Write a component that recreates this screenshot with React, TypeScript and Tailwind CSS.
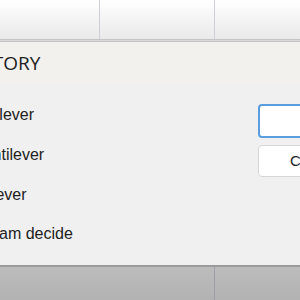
import { FC } from 'react'

const options = [
  { id: 'a', label: 'Cantilever', shift: '-ml-[38px]' },
  { id: 'b', label: 'Non-cantilever', shift: '-ml-[59px]' },
  { id: 'c', label: 'Whichever', shift: '-ml-[49px]' },
  { id: 'd', label: 'Let team decide', shift: '-ml-[41px]' },
]

const App: FC = () => {
  return (
    <div className="w-[300px] h-[300px] overflow-hidden flex flex-col bg-[#f0f0f0] font-['Liberation_Sans',Arial,sans-serif]">
      {/* table header behind the dialog */}
      <div className="h-[39px] flex bg-gradient-to-b from-white to-[#e9e9e9]">
        <div className="w-[100px] border-r border-[#cfcfdc]" />
        <div className="w-[115px] border-r border-[#cfcfdc]" />
        <div className="flex-1" />
      </div>
      <div className="h-[3px] border-y border-[#c4c4c4] bg-[#dadada]" />

      {/* dialog */}
      <div className="h-[42px] bg-[#f3f1ee] flex items-center">
        <span className="-ml-[37px] text-[19px] text-[#222] font-['Open_Sans','Noto_Sans',sans-serif]">HISTORY</span>
      </div>
      <div className="h-[181px] bg-[#f0f0f0] flex">
        <div className="flex-1 flex flex-col pt-[22px]">
          {options.map(o => (
            <div key={o.id} className="h-[41px] flex items-start">
              <span className={`text-[16px] leading-[18px] text-[#222] ${o.shift}`}>{o.label}</span>
            </div>
          ))}
        </div>
        <div className="w-[42px] flex flex-col gap-[7px] pt-[20px]">
          <button className="h-[34px] w-[80px] bg-white border-2 border-[#5a9ee0] rounded-[4px] text-[15px] text-[#222] text-left pl-[52px]">
            OK
          </button>
          <button className="h-[32px] w-[80px] bg-white border border-[#d6d6d6] rounded-[4px] text-[15px] text-[#222] text-left pl-[31px]">
            Cancel
          </button>
        </div>
      </div>

      {/* darkened area below the dialog */}
      <div className="flex-1 flex flex-col">
        <div className="h-[2px] bg-[#9a9a9a]" />
        <div className="flex-1 flex bg-gradient-to-b from-[#bcbcbc] to-[#b2b2b2]">
          <div className="w-[215px] border-r border-[#9d9dab]" />
          <div className="flex-1" />
        </div>
      </div>
    </div>
  )
}

export default App
